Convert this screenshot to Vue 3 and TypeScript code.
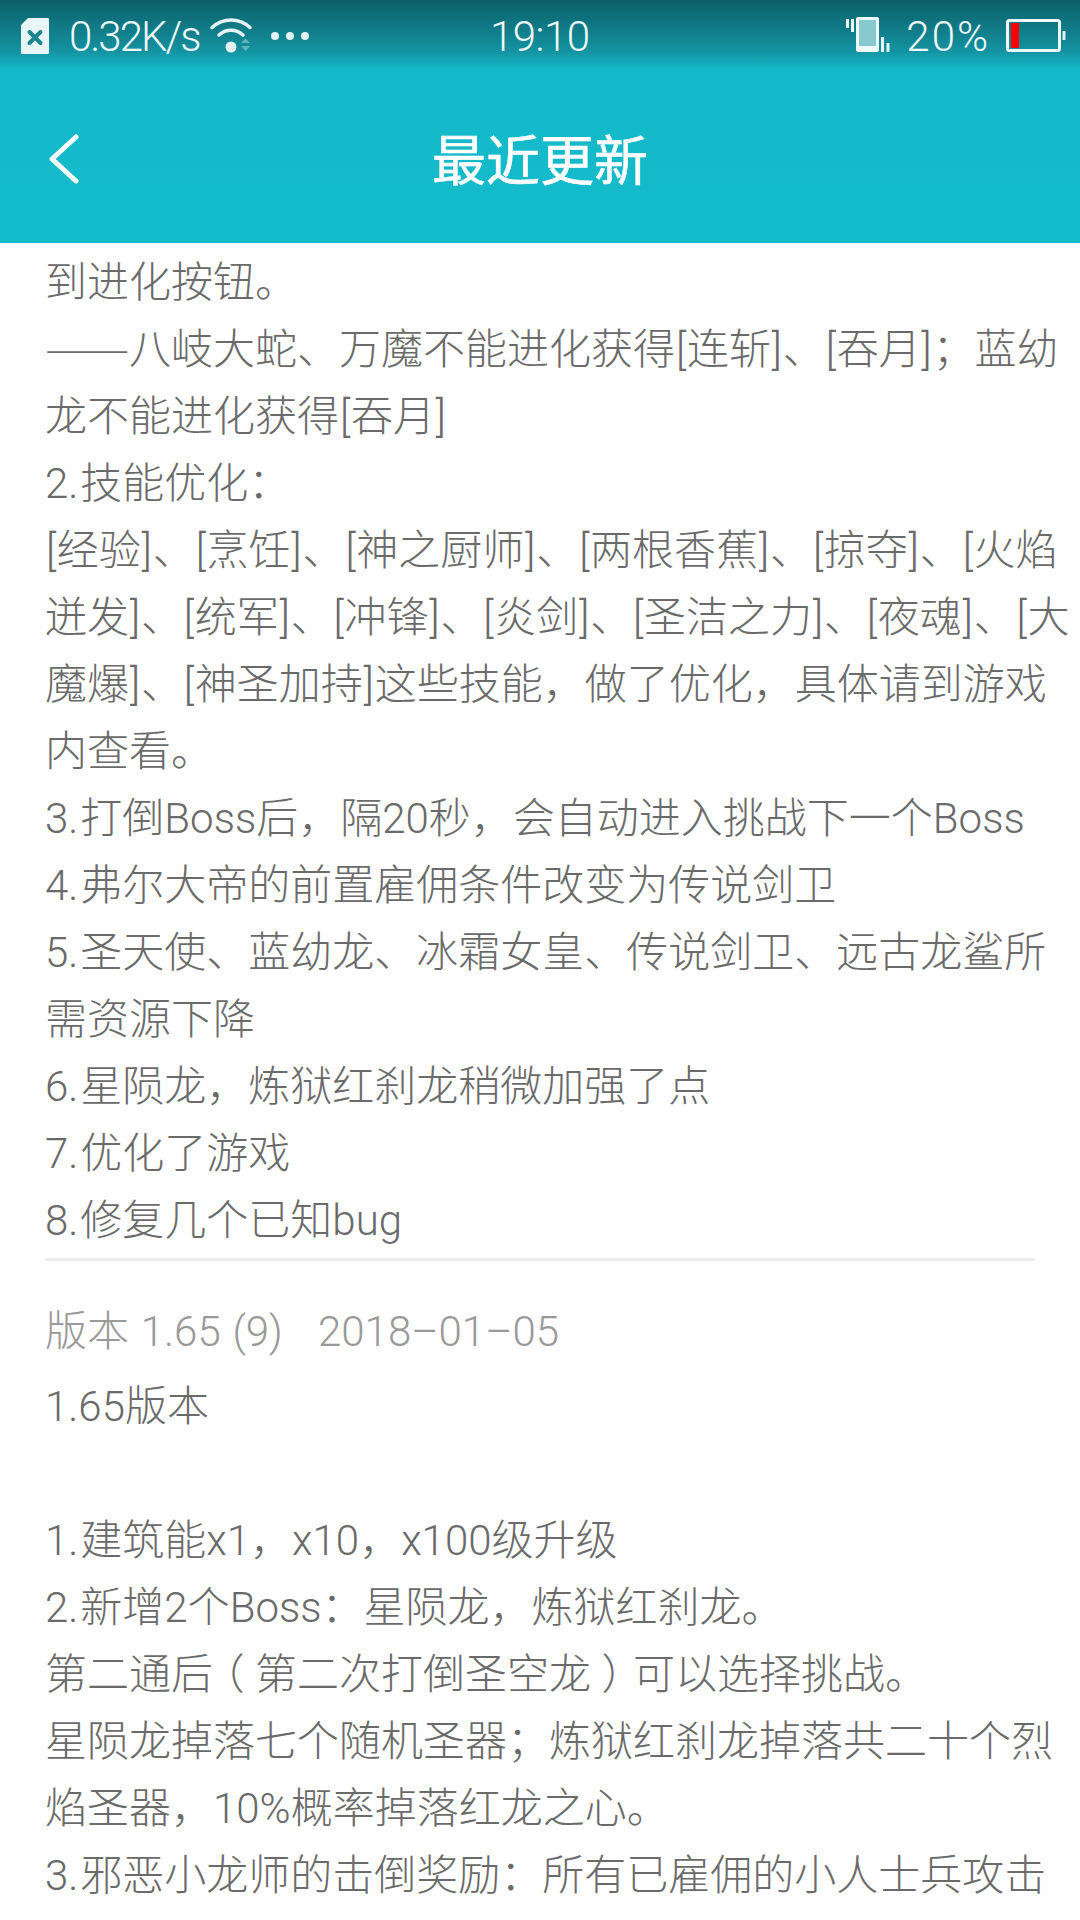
<script setup lang="ts">
interface Segment {
  text: string
  cls: string
}

const classFor: Record<string, string> = {
  '——': 'dash',
  '（': 'paren',
  '）': 'paren',
  '[': 'bracket',
  ']': 'bracket',
}

function toSegments(line: string): Segment[] {
  return line
    .split(/(^\d\.(?!\d)|——|（|）|\[|\])/)
    .filter((text) => text.length > 0)
    .map((text) => ({
      text,
      cls: classFor[text] ?? (/^\d\.$/.test(text) ? 'num' : ''),
    }))
}

const topLines: Segment[][] = [
  '到进化按钮。',
  '——八岐大蛇、万魔不能进化获得[连斩]、[吞月]；蓝幼',
  '龙不能进化获得[吞月]',
  '2.技能优化：',
  '[经验]、[烹饪]、[神之厨师]、[两根香蕉]、[掠夺]、[火焰',
  '迸发]、[统军]、[冲锋]、[炎剑]、[圣洁之力]、[夜魂]、[大',
  '魔爆]、[神圣加持]这些技能，做了优化，具体请到游戏',
  '内查看。',
  '3.打倒Boss后，隔20秒，会自动进入挑战下一个Boss',
  '4.弗尔大帝的前置雇佣条件改变为传说剑卫',
  '5.圣天使、蓝幼龙、冰霜女皇、传说剑卫、远古龙鲨所',
  '需资源下降',
  '6.星陨龙，炼狱红刹龙稍微加强了点',
  '7.优化了游戏',
  '8.修复几个已知bug',
].map(toSegments)

const bottomLines: Segment[][] = [
  '1.65版本',
  '\u00a0',
  '1.建筑能x1，x10，x100级升级',
  '2.新增2个Boss：星陨龙，炼狱红刹龙。',
  '第二通后（第二次打倒圣空龙）可以选择挑战。',
  '星陨龙掉落七个随机圣器；炼狱红刹龙掉落共二十个烈',
  '焰圣器，10%概率掉落红龙之心。',
  '3.邪恶小龙师的击倒奖励：所有已雇佣的小人士兵攻击',
].map(toSegments)
</script>

<template>
  <div class="screen">
    <header class="header">
      <div class="status">
        <div class="status-left">
          <svg class="sim" width="30" height="38" viewBox="0 0 30 38">
            <path d="M8 1H28a1 1 0 0 1 1 1V36a1 1 0 0 1-1 1H2a1 1 0 0 1-1-1V8Z" fill="#e8f5f6" />
            <path d="M9.500 15L20.500 26M20.500 15L9.500 26" stroke="#1a8490" stroke-width="4" stroke-linecap="round" />
          </svg>
          <span class="speed">0.32K/s</span>
          <svg class="wifi" width="44" height="36" viewBox="0 0 44 36">
            <path d="M2 9.500C13 -0.500 29 -0.500 40 9.500" fill="none" stroke="#e4f3f5" stroke-width="3.500" stroke-linecap="round" />
            <path d="M9 17C16 10.500 26 10.500 33 17" fill="none" stroke="#e4f3f5" stroke-width="3.500" stroke-linecap="round" />
            <circle cx="21" cy="29" r="5.500" fill="#e4f3f5" />
            <path d="M31 25L35.500 20.500L40 25Z M31 28H40L35.500 33Z" fill="#5fb6be" />
          </svg>
          <span class="dots"><i></i><i></i><i></i></span>
        </div>
        <span class="clock">19:10</span>
        <div class="status-right">
          <svg class="vibrate" width="44" height="36" viewBox="0 0 44 36">
            <rect x="0" y="2" width="3" height="9" fill="#eef8f9" />
            <rect x="5" y="2" width="3" height="13" fill="#eef8f9" />
            <rect x="10" y="0" width="23" height="35" rx="2" fill="#f0f9fa" />
            <rect x="13" y="3" width="17" height="26" fill="#88c8cf" />
            <rect x="35" y="20" width="3" height="15" fill="#e4f3f5" />
            <rect x="40.500" y="26" width="3" height="9" fill="#e4f3f5" />
          </svg>
          <span class="percent">20%</span>
          <svg class="battery" width="60" height="34" viewBox="0 0 60 34">
            <rect x="1.500" y="1.500" width="52" height="30" rx="2" fill="none" stroke="#eef8f9" stroke-width="3" />
            <rect x="5" y="4" width="8" height="25" fill="#ff0000" />
            <rect x="56.500" y="12" width="3" height="9" fill="#dff1f3" />
          </svg>
        </div>
      </div>
      <div class="nav">
        <svg class="back" width="32" height="50" viewBox="0 0 32 50">
          <path d="M28 3L4 25L28 47" fill="none" stroke="#fff" stroke-width="5" stroke-linecap="round" stroke-linejoin="round" />
        </svg>
        <h1 class="title">最近更新</h1>
      </div>
    </header>
    <main class="content">
      <div v-for="(line, i) in topLines" :key="i" class="line">
        <span v-for="(seg, j) in line" :key="j" :class="seg.cls">{{ seg.text }}</span>
      </div>
      <hr class="divider" />
      <div class="version">版本 1.65 (9)&nbsp;&nbsp; 2018–01–05</div>
      <div v-for="(line, i) in bottomLines" :key="i" class="line">
        <span v-for="(seg, j) in line" :key="j" :class="seg.cls">{{ seg.text }}</span>
      </div>
    </main>
  </div>
</template>

<style scoped>
.screen {
  width: 1080px;
  height: 1920px;
  overflow: hidden;
  background: #fff;
  font-family: Roboto, "Noto Sans CJK SC", sans-serif;
  font-weight: 300;
}
.header {
  height: 243px;
  background: linear-gradient(180deg, #0b5f68 0, #14919f 50px, #14b9c9 70px, #14bbcb 100%);
}
.status {
  height: 72px;
  position: relative;
  display: flex;
  align-items: center;
  justify-content: space-between;
  padding: 0 14px 0 20px;
  color: #eef8f9;
  font-size: 42px;
  font-weight: 300;
}
.status-left, .status-right {
  display: flex;
  align-items: center;
}
.speed {
  margin-left: 19px;
  letter-spacing: -2px;
}
.wifi { margin-left: 11px; }
.dots {
  display: flex;
  gap: 7px;
  margin-left: 17px;
}
.dots i {
  width: 8px;
  height: 8px;
  border-radius: 50%;
  background: #e4f3f5;
}
.clock {
  position: absolute;
  left: 490px;
  letter-spacing: -0.500px;
}
.percent {
  margin-left: 16px;
  letter-spacing: 2px;
}
.battery { margin-left: 16px; }
.vibrate { margin-bottom: 2px; }
.nav {
  height: 171px;
  position: relative;
  display: flex;
  align-items: center;
  justify-content: center;
}
.back {
  position: absolute;
  left: 48px;
  top: 62px;
}
.title {
  margin: 0;
  color: #fff;
  font-size: 54px;
  font-weight: 400;
  -webkit-text-stroke: 0.6px #fff;
  font-family: "Noto Sans CJK SC", sans-serif;
}
.content {
  padding: 6px 0 0 45px;
  color: #6a6a6a;
  font-size: 42px;
}
.line {
  height: 67px;
  line-height: 67px;
  white-space: nowrap;
}
.num {
  padding-right: 2px;
}
.dash {
  display: inline-block;
  width: 84px;
  line-height: 0;
  font-family: "Noto Sans CJK SC", sans-serif;
  transform: scaleX(1.21);
  transform-origin: left center;
}
.paren {
  padding: 0 10.500px;
  font-feature-settings: "halt";
}
.bracket {
  padding: 0 0.900px;
}
.divider {
  width: 990px;
  height: 3px;
  margin: 4px 0 0;
  border: 0;
  background: #eee;
}
.version {
  height: 72px;
  margin-top: 35px;
  margin-bottom: 5px;
  line-height: 72px;
  color: #999;
  white-space: nowrap;
  word-spacing: 1.500px;
}
</style>
